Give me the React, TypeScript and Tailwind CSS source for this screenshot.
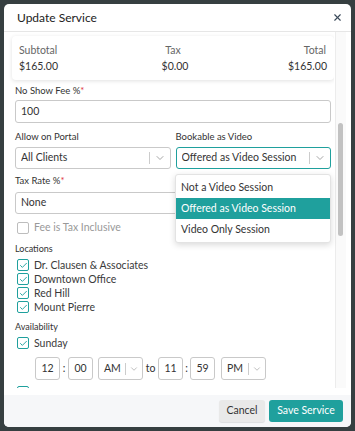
import { ChevronDown, X, Check } from "lucide-react";

const font = { fontFamily: "Lato, 'Open Sans', sans-serif" };

function Select({ value, active, className }: { value: string; active?: boolean; className?: string }) {
  return (
    <div
      className={`flex h-[22px] items-center rounded-[3px] border bg-white pl-[5px] ${
        active ? "border-[#1fa09d]" : "border-[#c9c9c9]"
      } ${className ?? ""}`}
    >
      <span className="flex-1 truncate text-[10.5px] text-[#333]">{value}</span>
      <span className="h-[12px] w-px bg-[#cccccc]" />
      <span className="flex w-[20px] justify-center text-[#888]">
        <ChevronDown size={12} strokeWidth={1.5} />
      </span>
    </div>
  );
}

function Box({ checked = true }: { checked?: boolean }) {
  return (
    <span
      className={`flex h-[12px] w-[12px] shrink-0 items-center justify-center rounded-[2px] border bg-white ${
        checked ? "border-[#1fa09d] text-[#1fa09d]" : "border-[#bdbdbd]"
      }`}
    >
      {checked && <Check size={9} strokeWidth={2.5} />}
    </span>
  );
}

function CheckRow({ label }: { label: string }) {
  return (
    <div className="flex h-[14px] items-center gap-[5px] pl-[2px]">
      <Box />
      <span className="text-[10.5px] leading-[14px] text-[#3a3a3a]">{label}</span>
    </div>
  );
}

function TimeBox({ value }: { value: string }) {
  return (
    <div className="flex h-[23px] w-[25px] items-center justify-center rounded-[3px] border border-[#c9c9c9] bg-white text-[10.5px] text-[#333]">
      {value}
    </div>
  );
}

function AmPm({ value }: { value: string }) {
  return (
    <div className="flex h-[23px] w-[45px] items-center rounded-[3px] border border-[#c9c9c9] bg-white pl-[5px]">
      <span className="flex-1 text-[10.5px] text-[#333]">{value}</span>
      <span className="h-[12px] w-px bg-[#cccccc]" />
      <span className="flex w-[16px] justify-center text-[#999]">
        <ChevronDown size={10} strokeWidth={1.5} />
      </span>
    </div>
  );
}

export default function App() {
  return (
    <div className="h-[431px] w-[355px] overflow-hidden bg-[#363f41] p-[4px]" style={font}>
      <div className="relative flex h-[423px] w-[347px] flex-col overflow-hidden rounded-[5px] bg-white">
        <div className="flex h-[28px] shrink-0 items-center justify-between border-b border-[#e6e6e6] pl-[13px] pr-[8px]">
          <span className="text-[12px] text-[#222]">Update Service</span>
          <X size={11} strokeWidth={2.5} className="text-[#3b4a5a]" />
        </div>

        <div className="flex min-h-0 flex-1 pb-[7px]">
          <div className="min-w-0 flex-1 overflow-hidden pl-[8px]">
            <div className="mt-[4px] h-[44px] rounded-[4px] bg-white px-[7px] pt-[7px] shadow-[0_1px_4px_rgba(0,0,0,0.12)]">
              <div className="flex justify-between text-[10.5px] leading-[14px] text-[#666]">
                <span className="w-[60px]">Subtotal</span>
                <span>Tax</span>
                <span className="w-[60px] pr-[1px] text-right">Total</span>
              </div>
              <div className="mt-[2px] flex justify-between text-[10.5px] leading-[14px] text-[#333]">
                <span className="w-[60px]">$165.00</span>
                <span className="pl-[4px]">$0.00</span>
                <span className="w-[60px] text-right">$165.00</span>
              </div>
            </div>

            <div className="px-[3px]">
              <div className="mt-[5px] text-[9.5px] leading-[12px] text-[#333]">
                No Show Fee %<span className="text-[#e0393e]">*</span>
              </div>
              <div className="mt-[3px] flex h-[23px] items-center rounded-[3px] border border-[#c9c9c9] pl-[5px] text-[10.5px] text-[#333]">
                100
              </div>

              <div className="mt-[8px] flex gap-[5px]">
                <div className="flex-1">
                  <div className="text-[9.5px] leading-[12px] text-[#333]">Allow on Portal</div>
                  <Select value="All Clients" className="mt-[4px]" />
                </div>
                <div className="flex-1">
                  <div className="text-[9.5px] leading-[12px] text-[#333]">Bookable as Video</div>
                  <Select value="Offered as Video Session" active className="mt-[4px]" />
                </div>
              </div>

              <div className="mt-[6px] text-[9.5px] leading-[12px] text-[#333]">
                Tax Rate %<span className="text-[#e0393e]">*</span>
              </div>
              <div className="mt-[5px] flex h-[22px] items-center rounded-[3px] border border-[#c9c9c9] pl-[5px] text-[10.5px] text-[#333]">
                None
              </div>

              <div className="mt-[7px] flex h-[14px] items-center gap-[5px] pl-[2px]">
                <Box checked={false} />
                <span className="text-[10.5px] text-[#999]">Fee is Tax Inclusive</span>
              </div>

              <div className="mt-[8px] text-[9px] leading-[12px] text-[#333]">Locations</div>
              <div className="mt-[3px]">
                <CheckRow label="Dr. Clausen & Associates" />
                <CheckRow label="Downtown Office" />
                <CheckRow label="Red Hill" />
                <CheckRow label="Mount Pierre" />
              </div>

              <div className="mt-[7px] text-[9px] leading-[12px] text-[#333]">Availability</div>
              <div className="mt-[3px]">
                <CheckRow label="Sunday" />
              </div>
              <div className="mt-[7px] flex items-center pl-[20px] text-[10.5px] text-[#333]">
                <TimeBox value="12" />
                <span className="w-[8px] text-center">:</span>
                <TimeBox value="00" />
                <span className="w-[5px]" />
                <AmPm value="AM" />
                <span className="w-[15px] text-center">to</span>
                <TimeBox value="11" />
                <span className="w-[7px] text-center">:</span>
                <TimeBox value="59" />
                <span className="w-[6px]" />
                <AmPm value="PM" />
              </div>
              <div className="mt-[6px] flex pl-[2px]">
                <Box />
              </div>
            </div>
          </div>

          <div className="relative ml-[1px] mr-[5px] w-[11px] border-l border-[#ececec] bg-[#fafafa]">
            <div className="absolute left-[2px] top-[91px] h-[113px] w-[5px] rounded-full bg-[#c2c2c2]" />
          </div>
        </div>

        <div className="flex h-[32px] shrink-0 items-center justify-end gap-[4px] bg-[#f6f7f9] pr-[8px]">
          <button className="h-[22px] w-[46px] rounded-[3px] bg-[#e9e9e9] text-[10.5px] text-[#333] shadow-[0_1px_1px_rgba(0,0,0,0.1)]">
            Cancel
          </button>
          <button className="h-[22px] w-[74px] rounded-[3px] bg-[#1fa09d] text-[10.5px] text-white">
            Save Service
          </button>
        </div>

        <div className="absolute left-[171px] top-[170px] w-[156px] rounded-[3px] border border-[#e3e3e3] bg-white py-[2px] shadow-[0_2px_6px_rgba(0,0,0,0.15)]">
          <div className="flex h-[21px] items-center pl-[5px] text-[10.5px] text-[#333]">Not a Video Session</div>
          <div className="flex h-[21px] items-center bg-[#1fa09d] pl-[5px] text-[10.5px] text-white">
            Offered as Video Session
          </div>
          <div className="flex h-[21px] items-center pl-[5px] text-[10.5px] text-[#333]">Video Only Session</div>
        </div>
      </div>
    </div>
  );
}
